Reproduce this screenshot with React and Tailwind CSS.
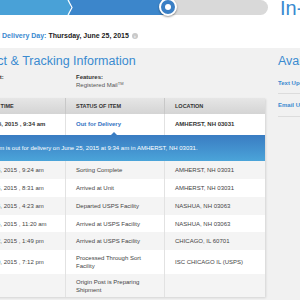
import React from "react";

const rows = [
  { t: "June 25, 2015 , 9:24 am", s: "Sorting Complete", l: "AMHERST, NH 03031", h: "h-[18px]", bg: "bg-[#f4f4f4]" },
  { t: "June 25, 2015 , 8:31 am", s: "Arrived at Unit", l: "AMHERST, NH 03031", h: "h-[18px]", bg: "bg-white" },
  { t: "June 25, 2015 , 4:23 am", s: "Departed USPS Facility", l: "NASHUA, NH 03063", h: "h-[18px]", bg: "bg-[#f4f4f4]" },
  { t: "June 24, 2015 , 11:20 am", s: "Arrived at USPS Facility", l: "NASHUA, NH 03063", h: "h-[17px]", bg: "bg-white" },
  { t: "June 22, 2015 , 1:49 pm", s: "Arrived at USPS Facility", l: "CHICAGO, IL 60701", h: "h-[18px]", bg: "bg-[#f4f4f4]" },
  { t: "June 20, 2015 , 7:12 pm", s: "Processed Through Sort Facility", l: "ISC CHICAGO IL (USPS)", h: "h-[24px]", bg: "bg-white" },
  { t: "", s: "Origin Post is Preparing Shipment", l: "", h: "h-[23px]", bg: "bg-[#f4f4f4]" },
];

function Row({ r }) {
  return (
    <div className={`grid grid-cols-[97px_99px_100px] ${r.h} ${r.bg} text-[6px] leading-[8px] text-[#444]`}>
      <div className="flex items-center pl-[10px] border-r border-[#e2e2e2]">{r.t}</div>
      <div className="flex items-center pl-[10px] pr-[14px] border-r border-[#e2e2e2]">{r.s}</div>
      <div className="flex items-center pl-[10px]">{r.l}</div>
    </div>
  );
}

export default function App() {
  return (
    <div className="w-[300px] h-[300px] overflow-hidden bg-white font-['Liberation_Sans',Arial,sans-serif]">
      <div className="ml-[-31px] w-[420px]">
        {/* progress */}
        <div className="flex h-[28px] items-start">
          <div className="relative h-[15px] w-[299px] rounded-r-full bg-[#d9d9d9]">
            <div className="absolute left-0 top-0 flex h-[15px] w-[199px]">
              <div className="h-full w-[101px] bg-[#49a1d7]" />
              <div className="h-full flex-1 bg-[#3c86cb]" />
            </div>
            <svg className="absolute left-[98px] top-0" width="7" height="15" viewBox="0 0 7 15">
              <polyline points="1,0 5,7.5 1,15" fill="none" stroke="#ffffff" strokeWidth="1.2" />
            </svg>
            <div className="absolute left-[190px] top-[-2px] flex h-[18px] w-[18px] items-center justify-center rounded-full border-[2px] border-white bg-[#3a7fc5] shadow-[0_1px_2px_rgba(0,0,0,0.4)]">
              <div className="h-[6px] w-[6px] rounded-full bg-white" />
            </div>
          </div>
          <div className="ml-[12px] text-[20px] leading-[16px] text-[#3a8bd0] whitespace-nowrap">In-Transit</div>
        </div>
        {/* delivery day */}
        <div className="flex h-[16px] items-center text-[7px] font-bold whitespace-nowrap">
          <span className="text-[#3b8ad0]">Expected Delivery Day:</span>
          <span className="ml-[2px] text-[#222]">Thursday, June 25, 2015</span>
          <span className="ml-[3px] flex h-[6px] w-[6px] items-center justify-center rounded-full bg-[#c9c9c9] text-[5px] leading-none text-white">›</span>
        </div>
        {/* panel */}
        <div className="mt-[4px] flex bg-[#f1f1f1] pt-[6px] h-[260px]">
          <div className="w-[296px]">
            <div className="ml-[-5px] text-[12.5px] leading-[14px] text-[#3a8bd0] whitespace-nowrap">Product &amp; Tracking Information</div>
            <div className="mt-[5px] grid grid-cols-[97px_199px] text-[6px] leading-[8px]">
              <div className="pl-[10px] font-bold text-[#333]">Product:</div>
              <div className="pl-[10px]">
                <div className="font-bold text-[#333]">Features:</div>
                <div className="text-[#555]">Registered Mail<sup className="text-[4px]">TM</sup></div>
              </div>
            </div>
            <div className="mt-[9px] shadow-[1px_1px_2px_rgba(0,0,0,0.12)]">
              <div className="grid h-[16px] grid-cols-[97px_99px_100px] bg-gradient-to-b from-[#e6e6e6] to-[#d4d4d4] text-[5.5px] font-bold uppercase text-[#333]">
                <div className="flex items-center pl-[10px] border-r border-[#c8c8c8]">Date &amp; Time</div>
                <div className="flex items-center pl-[10px] border-r border-[#c8c8c8]">Status of Item</div>
                <div className="flex items-center pl-[10px]">Location</div>
              </div>
              <div className="grid h-[21px] grid-cols-[97px_99px_100px] bg-white text-[6px] font-bold text-[#333]">
                <div className="flex items-center pl-[10px] border-r border-[#e2e2e2]">June 25, 2015 , 9:34 am</div>
                <div className="flex items-center pl-[10px] border-r border-[#e2e2e2] text-[#3573c3]">Out for Delivery</div>
                <div className="flex items-center pl-[10px]">AMHERST, NH 03031</div>
              </div>
              <div className="relative flex h-[26px] items-center bg-gradient-to-b from-[#3a7cc2] to-[#4ba4d9] pl-[10px] text-[6px] text-white whitespace-nowrap">
                <div className="absolute left-[142px] top-[-3px] h-0 w-0 border-x-[3px] border-b-[3px] border-x-transparent border-b-[#3a7cc2]" />
                Your item is out for delivery on June 25, 2015 at 9:34 am in AMHERST, NH 03031.
              </div>
              {rows.map((r, i) => (
                <Row key={i} r={r} />
              ))}
            </div>
          </div>
          <div className="ml-[13px] w-[100px]">
            <div className="text-[12.5px] leading-[14px] text-[#3a8bd0] whitespace-nowrap">Available Actions</div>
            <div className="mt-[11px] border-b border-[#dcdcdc] pb-[6px] text-[6px] font-bold leading-[8px] text-[#3b8ad0]">Text Updates</div>
            <div className="border-b border-[#dcdcdc] py-[7px] text-[6px] font-bold leading-[8px] text-[#3b8ad0]">Email Updates</div>
          </div>
        </div>
      </div>
    </div>
  );
}
